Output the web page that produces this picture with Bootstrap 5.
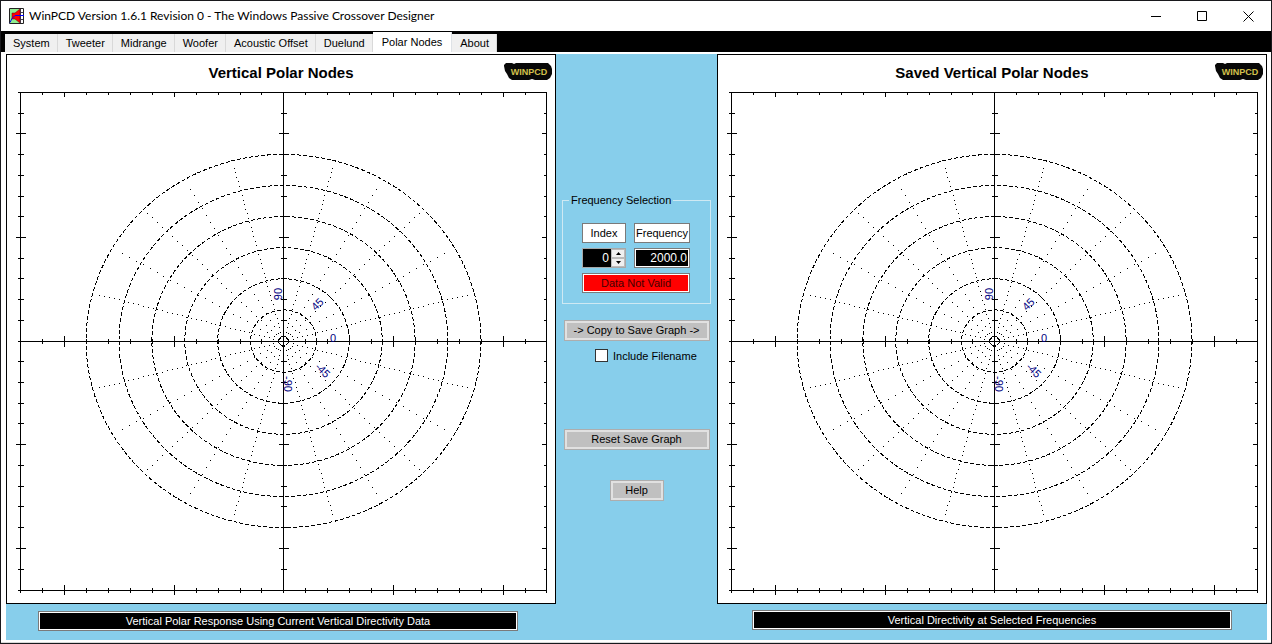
<!DOCTYPE html>
<html lang="en">
<head>
<meta charset="utf-8">
<meta name="viewport" content="width=device-width, initial-scale=1">
<title>WinPCD Version 1.6.1</title>
<link href="https://cdn.jsdelivr.net/npm/bootstrap@5.3.0/dist/css/bootstrap.min.css" rel="stylesheet">
<style>
body{font-family:"Liberation Sans",Arial,sans-serif;font-size:11px;line-height:14px;color:#000;background:#fff}
.app-window{border:1px solid #18181c;min-height:100vh}
.title-bar{height:30px;padding-left:7px;font-family:Lato,sans-serif;font-size:12px;line-height:16px}
.caption-btn{width:46px;height:30px;border:0;background:none;padding:0;display:grid;place-items:center}
.tab-strip{background:#000;height:21px;padding-left:4px;border:0;flex-wrap:nowrap}
.tab-strip .nav-link{height:18px;padding:0 7px 0 8px;border:0;border-right:1px solid #d9d9d9;border-radius:0;background:#f0f0f0;color:#000;line-height:19px;margin:0;white-space:nowrap}
.tab-strip .nav-link.active{height:20px;padding:0 9px;background:#fff;color:#000;line-height:18px}
.tab-page{border:solid #fff;border-width:2px 4px 2px 5px;box-shadow:0 1px #d8d8d8;background:#fff}
.page-body{background:#87ceeb;display:grid;grid-template-columns:minmax(0,1fr) 161px minmax(0,1fr)}
.graph-panel{background:#fff;border:1px solid #000}
.graph-head{height:33px;position:relative}
.graph-head h2{font-size:15px;line-height:18px;font-weight:700;margin:0;padding-top:9px;text-align:center}
.brand-mark{position:absolute;right:3px;top:7px}
.polar{display:block;width:100%;height:auto}
.polar text{font-size:11px;fill:#000080;text-anchor:middle}
.side-controls{padding-top:139px}
.freq-set{width:149px;margin-left:6px;border:1px solid #cfe9f3;padding:16px 20px 10px 19px}
.freq-set legend{float:none;width:auto;font-size:11px;line-height:14px;margin:0 0 0 -13px;padding:0 2px}
.freq-grid{display:grid;grid-template-columns:44px 56px;column-gap:8px;row-gap:5px}
.sunk{height:20px;border:1px solid #7a7a7a;line-height:18px;text-align:center;white-space:nowrap}
.ringed{box-shadow:inset 0 0 0 1px #fff}
.dark-box{background:#000;color:#fff}
.freq-grid input{width:100%;border-radius:0;font-size:12px;text-align:right;padding:0 2px;min-width:0}
.spin{height:20px;border:1px solid #a8a8a8;background:#000}
.spin input{background:#000;color:#fff;border:0;flex:1;line-height:18px}
.spin-btn{width:14px;height:9px;padding:0;border:1px solid #bbb;background:#f0f0f0;display:grid;place-items:center}
.invalid-box{grid-column:1/3;background:#f00;color:#400}
.push{height:21px;border:1px solid #adadad;box-shadow:inset 0 0 0 2px #e1e1e1;background:#c0c0c0;border-radius:0;padding:0;line-height:19px;font-size:11px;color:#000}
.push-wide{width:146px}
.push-help{width:54px;margin-top:30px}
.mt-copy{margin-top:16px}
.mt-reset{margin-top:66px}
.check-row{margin:7px 0 0 39px;gap:5px;height:15px}
.check-row input{appearance:none;width:13px;height:13px;margin:0;border:1px solid #333;background:#fff}
.check-row input:checked{background:#000;box-shadow:inset 0 0 0 2px #fff}
.foot{padding-bottom:9px}
.foot-left{margin:7px 38px 0 32px}
.foot-right{margin:6px 35px 0 35px}
</style>
</head>
<body>
<div class="app-window">
  <header class="title-bar d-flex align-items-center">
    <svg width="17" height="16" viewBox="0 0 17 16" class="me-1" aria-hidden="true">
      <path fill="#fff" stroke="#222" d="M1.500.5h14v15h-14z"/><path fill="#90ee90" d="M2 1h9v14H2z"/>
      <path stroke="#445" fill="none" d="M12.500 1v14M11 4.500h4M11 11.500h4"/>
      <path fill="#f00" stroke="#500" stroke-width=".5" d="M4 5h3l5-4v14l-5-4H4z"/>
      <path fill="none" stroke="#00f" d="M2 14.500l2-4 3-3h9"/>
    </svg>
    <span class="flex-grow-1 text-truncate">WinPCD Version 1.6.1 Revision 0 - The Windows Passive Crossover Designer</span>
    <button class="caption-btn" aria-label="Minimize"><svg width="11" height="11"><path d="M0 5.500h10" stroke="#000"/></svg></button>
    <button class="caption-btn" aria-label="Maximize"><svg width="11" height="11"><path d="M.5.5h9v9h-9z" fill="none" stroke="#000"/></svg></button>
    <button class="caption-btn" aria-label="Close"><svg width="11" height="11"><path d="M.5.5l10 10M10.500.5l-10 10" stroke="#000"/></svg></button>
  </header>
  <nav class="nav nav-tabs tab-strip align-items-end" role="tablist">
    <button class="nav-link" role="tab">System</button>
    <button class="nav-link" role="tab">Tweeter</button>
    <button class="nav-link" role="tab">Midrange</button>
    <button class="nav-link" role="tab">Woofer</button>
    <button class="nav-link" role="tab">Acoustic Offset</button>
    <button class="nav-link" role="tab">Duelund</button>
    <button class="nav-link active" role="tab" aria-selected="true">Polar Nodes</button>
    <button class="nav-link" role="tab">About</button>
  </nav>
  <main class="tab-page">
    <div class="page-body">
      <section class="graph-panel">
        <div class="graph-head">
          <h2>Vertical Polar Nodes</h2>
          <svg class="brand-mark" width="48" height="19" viewBox="0 0 48 19">
            <path fill="#080808" d="M2 1h6l2 1 2-1h32l3 3 1 3v5l-2 4-3 2H31l-3-1-3 1H8l-3-2-2-4-2-3-1-5V3z"/>
            <text x="25" y="13" text-anchor="middle" font-size="9" font-weight="700" fill="#d2c04c">WINPCD</text>
          </svg>
        </div>
        <svg class="polar" viewBox="7 88 548 515">
          <g class="plot-lines"></g>
          <text transform="translate(282 294) rotate(-90)">90</text>
          <text transform="translate(320 307) rotate(-45)">45</text>
          <text x="333" y="342">0</text>
          <text transform="translate(320 373) rotate(45)">-45</text>
          <text transform="translate(284 384) rotate(90)">-90</text>
        </svg>
      </section>
      <section class="side-controls">
        <fieldset class="freq-set">
          <legend>Frequency Selection</legend>
          <div class="freq-grid">
            <label class="sunk bg-white" for="idx">Index</label>
            <label class="sunk bg-white" for="freq">Frequency</label>
            <div class="spin d-flex">
              <input id="idx" type="text" inputmode="numeric" value="0">
              <div class="d-flex flex-column">
                <button class="spin-btn" aria-label="Increase index"><svg width="5" height="3"><path d="M0 3h5L2.500 0z"/></svg></button>
                <button class="spin-btn" aria-label="Decrease index"><svg width="5" height="3"><path d="M0 0h5L2.500 3z"/></svg></button>
              </div>
            </div>
            <input id="freq" class="sunk ringed dark-box" type="text" value="2000.0">
            <output class="sunk ringed invalid-box">Data Not Valid</output>
          </div>
        </fieldset>
        <div class="d-flex flex-column align-items-center">
          <button class="btn push push-wide mt-copy">-&gt; Copy to Save Graph -&gt;</button>
          <div class="check-row d-flex align-items-center align-self-start">
            <input type="checkbox" id="incl"><label for="incl">Include Filename</label>
          </div>
          <button class="btn push push-wide mt-reset">Reset Save Graph</button>
          <button class="btn push push-help">Help</button>
        </div>
      </section>
      <section class="graph-panel">
        <div class="graph-head">
          <h2>Saved Vertical Polar Nodes</h2>
          <svg class="brand-mark" width="48" height="19" viewBox="0 0 48 19">
            <path fill="#080808" d="M2 1h6l2 1 2-1h32l3 3 1 3v5l-2 4-3 2H31l-3-1-3 1H8l-3-2-2-4-2-3-1-5V3z"/>
            <text x="25" y="13" text-anchor="middle" font-size="9" font-weight="700" fill="#d2c04c">WINPCD</text>
          </svg>
        </div>
        <svg class="polar" viewBox="7 88 548 515">
          <g class="plot-lines"></g>
          <text transform="translate(282 294) rotate(-90)">90</text>
          <text transform="translate(320 307) rotate(-45)">45</text>
          <text x="333" y="342">0</text>
          <text transform="translate(320 373) rotate(45)">-45</text>
          <text transform="translate(284 384) rotate(90)">-90</text>
        </svg>
      </section>
      <div class="foot"><div class="foot-left sunk ringed dark-box">Vertical Polar Response Using Current Vertical Directivity Data</div></div>
      <div></div>
      <div class="foot"><div class="foot-right sunk ringed dark-box">Vertical Directivity at Selected Frequencies</div></div>
    </div>
  </main>
</div>
<script src="https://cdn.jsdelivr.net/npm/bootstrap@5.3.0/dist/js/bootstrap.bundle.min.js"></script>
<script>
(function(){
  // Frame, axes with ticks, dashed rings and dotted 15-degree spokes
  const L=20,R=546,T=92,B=590,cx=283,cy=341;
  let d='';
  const h=(x1,x2,y)=>{d+=`M${x1} ${y}.5H${x2}`};
  const v=(y1,y2,x)=>{d+=`M${x}.5 ${y1}V${y2}`};
  h(18,R+1,T);h(18,R+1,B);h(18,R+1,cy);
  v(T,B+3,L);v(T,B+3,R);v(T,B+3,cx);
  for(let i=-11;i<=11;i++){
    const x=Math.round(cx+.4+i*21.93),y=Math.round(cy+i*20.72-.4),m=i%5===0;
    if(i&&x>L&&x<R){v(T,T+(m?5:3),x);v(B-(m?5:2),B+(m?5:3),x);v(cy-(m?5:2),cy+(m?6:3),x)}
    if(i&&y>T&&y<B){h(L-(m?4:2),L+(m?6:4),y);h(R-(m?4:2),R+1,y);h(cx-(m?4:2),cx+(m?6:4),y)}
  }
  let out=`<path d="${d}" stroke="#000" shape-rendering="crispEdges"/>`;
  for(let k=1;k<=6;k++)
    out+=`<ellipse cx="283.5" cy="341" rx="${k*32.9}" ry="${k*31.1}" fill="none" stroke="#000" stroke-dasharray="4 2" shape-rendering="crispEdges"/>`;
  out+='<path d="M281.500 336.500h4l4 5-4 4-2 1-2-1-4-4z" fill="none" stroke="#000" shape-rendering="crispEdges"/>';
  let dots='';
  for(let a=15;a<360;a+=15){
    if(a%90===0)continue;
    const t=a*Math.PI/180,step=a%45===0?7:a%30===0?8:5;
    for(let r=10;r<194;r+=step)
      dots+=`M${Math.round(cx+r*Math.cos(t))} ${Math.round(cy-r*.945*Math.sin(t))}h1v1h-1z`;
  }
  out+=`<path d="${dots}" fill="#000" shape-rendering="crispEdges"/>`;
  document.querySelectorAll('.plot-lines').forEach(g=>{g.innerHTML=out});
})();
</script>
</body>
</html>
